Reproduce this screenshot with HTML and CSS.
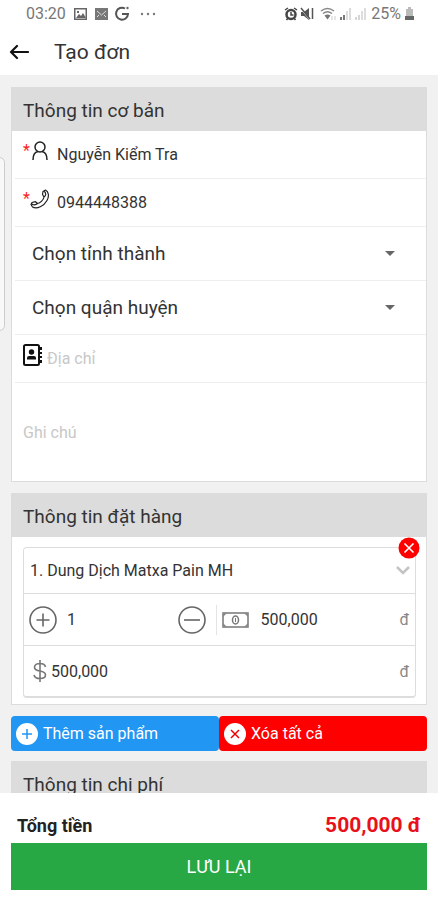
FILE: index.html
```html
<!DOCTYPE html>
<html lang="vi">
<head>
<meta charset="utf-8">
<meta name="viewport" content="width=device-width, initial-scale=1">
<title>Tạo đơn</title>
<link rel="stylesheet" href="styles.css">
</head>
<body>
<div class="status">
  <span class="status-text">03:20</span>
  <svg class="status-picture" width="13" height="12" viewBox="0 0 13 12"><path fill="#666" fill-rule="evenodd" d="M0 0h13v12H0zM1.500 1.500v9h10v-9zM2 10l3-4 2 2 2-3 3 5zM3 3h2v2H3z"/></svg>
  <svg class="status-mail" width="13" height="12" viewBox="0 0 13 12"><path fill="#777" d="M0 0h13v12H0z"/><path d="M2 3l4.500 4L11 3M2 9l2-2m7 2L9 7" fill="none" stroke="#ddd"/></svg>
  <svg class="status-google" width="16" height="16" viewBox="0 0 16 16"><path d="M11 2.500A6 6 0 1 0 14 8H8" fill="none" stroke="#555" stroke-width="2"/><circle cx="13.500" cy="2" r="1.200" fill="#666"/></svg>
  <svg class="status-dots" width="16" height="4" viewBox="0 0 16 4"><g fill="#777"><circle cx="2" cy="2" r="1.200"/><circle cx="8" cy="2" r="1.200"/><circle cx="14" cy="2" r="1.200"/></g></svg>
  <span class="spacer"></span>
  <svg width="14" height="14" viewBox="0 0 14 14"><circle cx="7" cy="7.500" r="4.500" fill="#fff" stroke="#444" stroke-width="2.500"/><path d="M1 3l3-2m6 0l3 2M2.500 13l1.500-2m7.500 2L10 11M7 5v3h2.500" fill="none" stroke="#444" stroke-width="1.500"/></svg>
  <svg class="status-mute" width="14" height="14" viewBox="0 0 14 14"><path d="M1 5h3l5-4v12L4 9H1z" fill="#555"/><path d="M0 1l10 12" stroke="#fff"/><path d="M1 1l9 11M12.500 1v11" stroke="#555" stroke-width="1.500"/></svg>
  <svg class="status-wifi" width="17" height="14" viewBox="0 0 17 14"><g fill="none" stroke="#888" stroke-width="1.500"><path d="M1 4q6.500-5 13 0M3 6.500q4.500-3.500 9 0"/></g><path d="M4.500 8.500q3-2 6 0l-3 4z" fill="#777"/><path d="M12 9v4m3-4v4" stroke="#ccc"/></svg>
  <svg class="status-signal" width="13" height="12" viewBox="0 0 13 12"><path d="M1 9h2v3H1zM4 7h2v5H4z" fill="#777"/><path d="M7 3h2v9H7zM10 0h2v12h-2z" fill="#ddd"/></svg>
  <svg class="status-signal" width="13" height="12" viewBox="0 0 13 12"><path d="M1 9h2v3H1zM4 7h2v5H4z" fill="#d5d5d5"/><path d="M7 3h2v9H7zM10 0h2v12h-2z" fill="#ddd"/></svg>
  <span class="status-text battery-text">25%</span>
  <svg class="status-battery" width="9" height="13" viewBox="0 0 9 13"><path d="M3 0h3v2h2v8H1V2h2z" fill="#bbb"/><path d="M0 9h9v4H0z" fill="#666"/></svg>
</div>

<header class="appbar">
  <button class="back" type="button" aria-label="Quay lại"><svg width="20" height="16" viewBox="0 0 20 16"><path d="M19 8H2M8 2L2 8l6 6" fill="none" stroke="#111" stroke-width="2.200" stroke-linecap="round" stroke-linejoin="round"/></svg></button>
  <h1>Tạo đơn</h1>
</header>

<main class="content">
  <div class="edge-handle"></div>
  <section class="card">
    <h2>Thông tin cơ bản</h2>
    <div class="row">
      <label class="field-label" for="name" aria-label="Họ tên"><span class="required">*</span><svg width="16" height="20" viewBox="0 0 16 20"><g fill="none" stroke="#222" stroke-width="1.500"><ellipse cx="8" cy="6" rx="5" ry="5"/><path d="M1 19c0-5 2-8 5-8.500M15 19c0-5-2-8-5-8.500"/></g></svg></label>
      <input id="name" type="text" value="Nguyễn Kiểm Tra">
    </div>
    <div class="row">
      <label class="field-label" for="phone" aria-label="Số điện thoại"><span class="required">*</span><svg class="phone" width="20" height="20" viewBox="0 0 20 20"><path d="M13 2.500L15.500 1c3 1.500 4 6 1.500 10.500C14 17 7 20.500 2.500 18L1 15.500 2 13.500l3.500-.8 2 1.800c3-.5 6-3.500 6.500-6.500L12.500 5.500zM1.500 14.500c1 1.500 4 2 6 0M14 8c2.500-1.500 2-4.500 0-6" fill="none" stroke="#222" stroke-width="1.200" stroke-linejoin="round"/></svg></label>
      <input id="phone" type="tel" value="0944448388">
    </div>
    <div class="row select-row">
      <select aria-label="Tỉnh thành"><option>Chọn tỉnh thành</option></select>
      <svg class="caret" width="10" height="5" viewBox="0 0 10 5"><path d="M0 0h10L5 5z" fill="#666"/></svg>
    </div>
    <div class="row select-row">
      <select aria-label="Quận huyện"><option>Chọn quận huyện</option></select>
      <svg class="caret" width="10" height="5" viewBox="0 0 10 5"><path d="M0 0h10L5 5z" fill="#666"/></svg>
    </div>
    <div class="row">
      <label class="address-label" for="address" aria-label="Địa chỉ"><svg width="20" height="22" viewBox="0 0 20 22"><rect x="1" y="1" width="15" height="20" rx="1.500" fill="none" stroke="#111" stroke-width="2"/><circle cx="8.500" cy="8" r="2.700" fill="#111"/><path d="M4 15.500v-1.500q0-2 2-2h5q2 0 2 2v1.500z" fill="#111"/><path d="M18 3v3m0 2v2m0 2v2m0 2v3" stroke="#111" stroke-width="2"/></svg></label>
      <input id="address" type="text" placeholder="Địa chỉ">
    </div>
    <textarea class="note" aria-label="Ghi chú" placeholder="Ghi chú"></textarea>
  </section>

  <section class="card">
    <h2>Thông tin đặt hàng</h2>
    <div class="product">
      <button class="remove" type="button" aria-label="Xóa sản phẩm"><svg width="22" height="22" viewBox="0 0 22 22"><circle cx="11" cy="11" r="10.500" fill="#f00"/><path d="M6.500 6.500l9 9m0-9l-9 9" stroke="#fff" stroke-width="1.600"/></svg></button>
      <div class="product-name">
        <select aria-label="Sản phẩm"><option>1. Dung Dịch Matxa Pain MH</option></select>
        <svg width="14" height="9" viewBox="0 0 14 9"><path d="M1 1l6 6 6-6" fill="none" stroke="#c4c4c4" stroke-width="2.500"/></svg>
      </div>
      <div class="product-line">
        <div class="quantity">
          <button type="button" aria-label="Tăng"><svg width="28" height="28" viewBox="0 0 28 28"><g fill="none" stroke="#666" stroke-width="1.600"><circle cx="14" cy="14" r="13"/><path d="M7.500 14h13M14 7.500v13"/></g></svg></button>
          <input type="text" aria-label="Số lượng" value="1">
          <button type="button" aria-label="Giảm"><svg width="28" height="28" viewBox="0 0 28 28"><g fill="none" stroke="#666" stroke-width="1.600"><circle cx="14" cy="14" r="13"/><path d="M6 14h16"/></g></svg></button>
        </div>
        <div class="price">
          <label for="price" aria-label="Đơn giá"><svg width="27" height="16" viewBox="0 0 27 16"><rect x="1" y="1" width="25" height="14" fill="none" stroke="#777" stroke-width="1.500"/><path d="M1 1h4L1 5zM26 1h-4l4 4zM1 15h4l-4-4zM26 15h-4l4-4z" fill="#888"/><ellipse cx="13.500" cy="8" rx="3" ry="4" fill="none" stroke="#777" stroke-width="1.500"/><path d="M13.500 6v4" stroke="#777"/></svg></label>
          <input id="price" type="text" value="500,000">
          <span class="unit">đ</span>
        </div>
      </div>
      <div class="product-line total-line">
        <label for="total" aria-label="Thành tiền"><svg width="14" height="22" viewBox="0 0 14 22"><path d="M12.500 7C12 4.500 10 3.500 7 3.500S1.500 5 1.500 7.300 3.500 10.500 7 11s5.500 1.500 5.500 4-2.500 3.500-5.500 3.500-5.500-1-6-3.500M7 0v22" fill="none" stroke="#777" stroke-width="1.600"/></svg></label>
        <input id="total" type="text" value="500,000">
        <span class="unit">đ</span>
      </div>
    </div>
  </section>

  <div class="actions">
    <button class="add" type="button"><svg width="22" height="22" viewBox="0 0 22 22"><circle cx="11" cy="11" r="11" fill="#fff"/><path d="M6 11h10M11 6v10" stroke="#2196f3" stroke-width="1.500"/></svg>Thêm sản phẩm</button>
    <button class="clear" type="button"><svg width="22" height="22" viewBox="0 0 22 22"><circle cx="11" cy="11" r="11" fill="#fff"/><path d="M7 7l8 8m0-8l-8 8" stroke="#e00" stroke-width="1.500"/></svg>Xóa tất cả</button>
  </div>

  <section class="card">
    <h2>Thông tin chi phí</h2>
  </section>
</main>

<footer class="footer">
  <div class="sum"><span>Tổng tiền</span><strong>500,000 đ</strong></div>
  <button class="save" type="submit">LƯU LẠI</button>
</footer>
</body>
</html>
```
FILE: styles.css
```css
* {
  box-sizing: border-box;
}

body {
  margin: 0;
  height: 100vh;
  display: flex;
  flex-direction: column;
  background: #fff;
  color: #333;
  font-family: Roboto, "Noto Sans", sans-serif;
  font-size: 16px;
}

svg {
  display: block;
  flex: none;
}

button,
input,
select,
textarea {
  margin: 0;
  padding: 0;
  border: 0;
  background: none;
  color: inherit;
  font: inherit;
  outline: 0;
}

input,
select {
  flex: 1;
  min-width: 0;
  height: 32px;
  appearance: none;
}

input::placeholder,
textarea::placeholder {
  color: #c8c8c8;
  opacity: 1;
}

.status {
  flex: none;
  height: 27px;
  padding: 0 24px 0 26px;
  display: flex;
  align-items: center;
}

.status-text {
  color: #777;
  font-size: 16px;
}

.status-picture,
.status-mail {
  margin-left: 8px;
}

.status-google {
  margin-left: 6px;
}

.status-dots {
  margin-left: 10px;
}

.spacer {
  flex: 1;
}

.status-mute {
  margin-left: 2px;
}

.status-wifi {
  margin-left: 6px;
}

.status-signal {
  margin-left: 2px;
}

.battery-text {
  margin: 0 4px;
}

.appbar {
  flex: none;
  height: 48px;
  padding: 2px 9px 0;
  display: flex;
  align-items: center;
  gap: 25px;
}

.appbar h1 {
  margin: 0;
  font-size: 21px;
  font-weight: 400;
}

.content {
  position: relative;
  flex: 1;
  min-height: 0;
  overflow: hidden;
  padding: 12px 11px 0;
  background: #f1f1f1;
}

.edge-handle {
  position: absolute;
  left: -6px;
  top: 82px;
  width: 11px;
  height: 174px;
  border: 1px solid #ccc;
  border-radius: 6px;
  background: #f8f8f8;
}

.card {
  margin-bottom: 11px;
  border: 1px solid #dcdcdc;
  background: #fff;
}

.card h2 {
  margin: 0;
  padding: 2px 11px 0;
  height: 43px;
  background: #dcdcdc;
  font-size: 19px;
  font-weight: 400;
  line-height: 42px;
}

.row {
  height: 48px;
  margin-left: 3px;
  padding-left: 8px;
  display: flex;
  align-items: center;
  border-bottom: 1px solid #eee;
}

.field-label {
  width: 34px;
  padding-bottom: 8px;
  display: flex;
}

.field-label .phone {
  margin-left: -2px;
}

.required {
  width: 9px;
  color: #f22;
  line-height: 20px;
}

.address-label {
  padding: 0 4px 8px 0;
}

.select-row {
  height: 54px;
  padding: 0 31px 0 17px;
  font-size: 19px;
}

.note {
  display: block;
  width: 100%;
  height: 98px;
  padding: 40px 11px 0;
  line-height: 20px;
  resize: none;
}

.product {
  position: relative;
  margin: 10px 10px 6px 11px;
  border: 1px solid #ddd;
  border-bottom-width: 2px;
  border-radius: 4px;
}

.remove {
  position: absolute;
  right: -5px;
  top: -11px;
}

.product-name {
  height: 46px;
  padding: 0 5px 0 6px;
  display: flex;
  align-items: center;
  border-bottom: 1px solid #ddd;
}

.product-line {
  height: 51px;
  display: flex;
  align-items: center;
}

.product-line + .product-line {
  border-top: 1px solid #ddd;
}

.quantity,
.price {
  min-width: 0;
  height: 30px;
  display: flex;
  align-items: center;
}

.quantity {
  flex: 0 0 49%;
  gap: 10px;
  padding: 0 10px 0 5px;
}

.price {
  flex: 1;
  gap: 12px;
  padding: 0 6px 0 5px;
  border-left: 1px solid #e4e4e4;
}

.unit {
  color: #888;
}

.total-line {
  gap: 4px;
  padding: 0 6px 0 9px;
}

.actions {
  display: flex;
  margin-bottom: 10px;
}

.actions button {
  flex: 1;
  height: 35px;
  padding: 0 5px;
  display: flex;
  align-items: center;
  gap: 5px;
  border-radius: 4px;
  color: #fff;
}

.actions .add {
  background: #2196f3;
}

.actions .clear {
  background: #f00;
}

.footer {
  flex: none;
  padding: 14px 11px 10px;
}

.sum {
  display: flex;
  justify-content: space-between;
  align-items: center;
  height: 36px;
  padding: 0 6px;
  color: #222;
  font-size: 18px;
  font-weight: 700;
}

.sum strong {
  color: #e8111a;
  font-size: 21px;
  font-weight: 700;
}

.save {
  width: 100%;
  height: 47px;
  background: #28a745;
  color: #fff;
  font-size: 18px;
}
```
